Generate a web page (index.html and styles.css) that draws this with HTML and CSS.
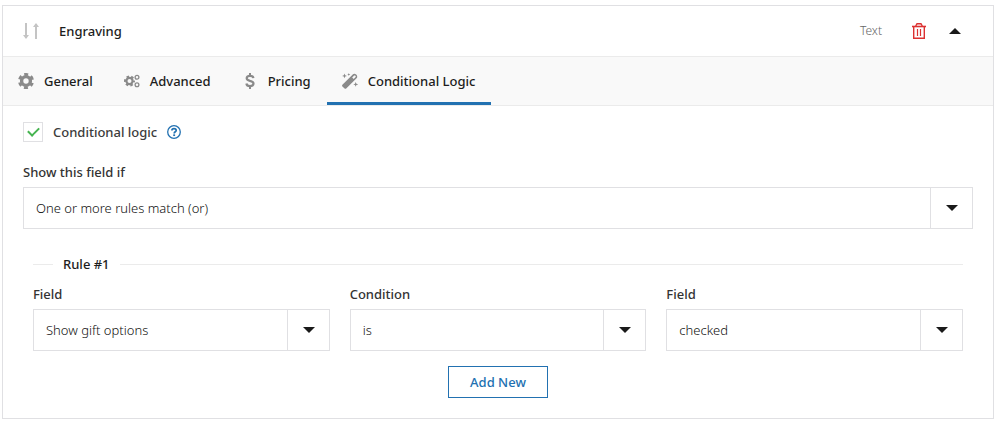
FILE: index.html
```
<!DOCTYPE html>
<html lang="en">
<head>
    <meta charset="UTF-8">
    <meta name="viewport" content="width=device-width, initial-scale=1.0">
    <title>Product fields</title>
    <link rel="stylesheet" href="styles.css">
</head>
<body>
    <div class="field-card">
        <div class="field-header">
            <svg class="sort-icon" width="16" height="16" viewBox="0 0 16 16" aria-hidden="true">
                <path d="M3 0v15M13 16V1" fill="none" stroke="#c4c4c4" stroke-width="2"/>
                <path d="M0 12h6l-3 4zM10 4h6l-3-4z" fill="#c4c4c4"/>
            </svg>
            <h2>Engraving</h2>
            <span class="field-type">Text</span>
            <button type="button" class="icon-button" aria-label="Delete field">
                <svg width="14" height="16" viewBox="0 0 14 16" fill="none" stroke="#dc3232">
                    <path d="M0 3.5h14" stroke-width="1.6"/>
                    <path d="M3.7 3L5 .8h4L10.3 3M1.7 4v11.2h10.6V4" stroke-width="1.4"/>
                    <path d="M5.5 6v7M8.5 6v7" stroke-width="1.2"/>
                </svg>
            </button>
            <button type="button" class="icon-button" aria-label="Collapse field">
                <svg width="12" height="6" viewBox="0 0 12 6"><path d="M0 6L6 0l6 6z" fill="#1a1a1a"/></svg>
            </button>
        </div>

        <div class="tabs" role="tablist">
            <button type="button" class="tab" role="tab">
                <svg width="16" height="16" viewBox="0 0 16 16" fill="none" stroke="#8a8a8a">
                    <circle cx="8" cy="8" r="4.4" stroke-width="3.4"/>
                    <circle cx="8" cy="8" r="6.6" stroke-width="2.8" stroke-dasharray="3.8 3.11" stroke-dashoffset="1.9" transform="rotate(30 8 8)"/>
                </svg>
                General
            </button>
            <button type="button" class="tab" role="tab">
                <svg width="16" height="16" viewBox="0 0 16 16" fill="none" stroke="#8a8a8a">
                    <circle cx="5.5" cy="8" r="3.1" stroke-width="2.2"/>
                    <circle cx="5.5" cy="8" r="4.5" stroke-width="2" stroke-dasharray="2.5 2.21" stroke-dashoffset="1.2"/>
                    <circle cx="13" cy="4.2" r="1.9" stroke-width="1.3"/>
                    <circle cx="13" cy="11.8" r="1.9" stroke-width="1.3"/>
                </svg>
                Advanced
            </button>
            <button type="button" class="tab" role="tab">
                <svg width="16" height="16" viewBox="0 0 16 16" fill="none" stroke="#8a8a8a">
                    <path d="M11.4 5.2C11.2 3.6 9.8 2.9 8 2.9c-2 0-3.3.9-3.3 2.4C4.700 6.900 6.200 7.400 8 7.900c2 .5 3.500 1 3.500 2.700 0 1.500-1.400 2.500-3.500 2.500-2 0-3.400-.9-3.600-2.600" stroke-width="2.200"/>
                    <path d="M8 0v3M8 13v3" stroke-width="2"/>
                </svg>
                Pricing
            </button>
            <button type="button" class="tab active" role="tab" aria-selected="true">
                <svg width="16" height="16" viewBox="0 0 16 16" fill="#8a8a8a">
                    <path fill-rule="evenodd" d="M.4 11.800L11 1.200q1.500-1.300 3.200.4t.6 3.300L4.200 15.500q-.8.700-1.600 0L.4 13.400q-.7-.8 0-1.600zM10.200 4.500l1.500 1.500 1.900-2q.4-.8-.1-1.300t-1.300-.2z"/>
                    <path d="M2.500.5l.7 1.700 1.700.7-1.700.7-.7 1.700-.7-1.700L.1 2.900l1.700-.7zM6.800 0l.4 1.100 1.100.4-1.100.4-.4 1.100-.4-1.100-1.100-.4 1.100-.4zM13.700 9l.7 1.700 1.700.7-1.700.7-.7 1.700-.7-1.700-1.700-.7 1.700-.7z"/>
                </svg>
                Conditional Logic
            </button>
        </div>

        <div class="tab-content">
            <div class="toggle-row">
                <input type="checkbox" id="enable-logic" checked>
                <label for="enable-logic">Conditional logic</label>
                <button type="button" class="icon-button" aria-label="Help">
                    <svg width="14" height="14" viewBox="0 0 14 14" fill="none" stroke="#2271b1">
                        <circle cx="7" cy="7" r="6.300" stroke-width="1.300"/>
                        <path d="M4.900 5.600C4.900 4.300 5.700 3.700 7 3.700s2.200.6 2.200 1.700C9.200 6.800 7.200 6.700 7.200 8.400" stroke-width="1.700"/>
                        <path d="M6.200 10.200h1.900" stroke-width="1.700"/>
                    </svg>
                </button>
            </div>

            <label class="field-label" for="match">Show this field if</label>
            <div class="select-box">
                <select id="match">
                    <option>One or more rules match (or)</option>
                    <option>All rules match (and)</option>
                </select>
            </div>

            <div class="rule">
                <h3>Rule #1</h3>
                <div class="rule-fields">
                    <div>
                        <label class="field-label" for="rule-field">Field</label>
                        <div class="select-box">
                            <select id="rule-field"><option>Show gift options</option></select>
                        </div>
                    </div>
                    <div>
                        <label class="field-label" for="rule-condition">Condition</label>
                        <div class="select-box">
                            <select id="rule-condition"><option>is</option><option>is not</option></select>
                        </div>
                    </div>
                    <div>
                        <label class="field-label" for="rule-value">Field</label>
                        <div class="select-box">
                            <select id="rule-value"><option>checked</option></select>
                        </div>
                    </div>
                </div>
            </div>

            <button type="button" class="add-button">Add New</button>
        </div>
    </div>
</body>
</html>
```
FILE: styles.css
```
* {
    box-sizing: border-box;
}
body {
    margin: 5px 10px 8px 2px;
    font-family: "Noto Sans", "Open Sans", sans-serif;
    font-size: 13px;
    line-height: 20px;
    color: #1d1d1d;
    background: #fff;
}
button, select {
    font: inherit;
    color: inherit;
    border: 0;
    border-radius: 0;
    background: none;
}
svg {
    display: block;
    flex: none;
}
.field-card {
    border: 1px solid #e0e0e3;
}

.field-header {
    display: flex;
    align-items: center;
    height: 51px;
    padding: 0 32px 0 20px;
    border-bottom: 1px solid #ebebeb;
}
.field-header h2 {
    flex: 1;
    margin: 0 0 0 20px;
    font-size: 13px;
    font-weight: 500;
}
.field-type {
    margin-right: 30px;
    font-size: 12px;
    font-weight: 300;
    color: #666;
}
.icon-button {
    padding: 0;
    cursor: pointer;
}
.icon-button + .icon-button {
    margin-left: 23px;
}

.tabs {
    display: flex;
    height: 49px;
    background: #f9f9f9;
    border-bottom: 1px solid #ebebeb;
}
.tab {
    display: flex;
    align-items: center;
    gap: 10px;
    padding: 3px 16px 0 15px;
    border-bottom: 3px solid transparent;
    font-weight: 500;
    cursor: pointer;
}
.tab.active {
    border-bottom-color: #2271b1;
}

.tab-content {
    padding: 16px 20px 20px;
}
.toggle-row {
    display: flex;
    align-items: center;
    gap: 10px;
    margin-bottom: 20px;
    font-weight: 500;
    color: #3c3c3c;
}
.toggle-row input {
    display: grid;
    place-items: center;
    appearance: none;
    width: 20px;
    height: 20px;
    margin: 0;
    border: 1px solid #e0e0e3;
}
.toggle-row input:checked::before {
    content: "";
    width: 9px;
    height: 5px;
    margin-bottom: 3px;
    border: solid #46b450;
    border-width: 0 0 2px 2px;
    transform: rotate(-45deg);
}
.field-label {
    display: block;
    margin-bottom: 5px;
    font-weight: 500;
    color: #333;
}

.select-box {
    position: relative;
}
.select-box select {
    display: block;
    appearance: none;
    width: 100%;
    height: 42px;
    padding: 0 54px 0 12px;
    border: 1px solid #e0e0e3;
    font-weight: 300;
    color: #111;
}
.select-box::before {
    content: "";
    position: absolute;
    top: 0;
    right: 42px;
    height: 100%;
    border-left: 1px solid #e0e0e3;
}
.select-box::after {
    content: "";
    position: absolute;
    top: 18px;
    right: 15px;
    border: solid transparent;
    border-width: 6px 6px 0;
    border-top-color: #1a1a1a;
    pointer-events: none;
}

.rule {
    padding: 25px 10px 0;
}
.rule h3 {
    display: flex;
    align-items: center;
    gap: 10px;
    margin: 0 0 10px;
    font-size: 13px;
    font-weight: 500;
}
.rule h3::before, .rule h3::after {
    content: "";
    width: 20px;
    border-top: 1px solid #ebebeb;
}
.rule h3::after {
    flex: 1;
}
.rule-fields {
    display: grid;
    grid-template-columns: repeat(3, 1fr);
    gap: 20px;
}
.add-button {
    display: block;
    height: 32px;
    margin: 15px auto 0;
    padding: 0 21px;
    border: 1px solid #2271b1;
    font-weight: 500;
    color: #2271b1;
    cursor: pointer;
}
```
